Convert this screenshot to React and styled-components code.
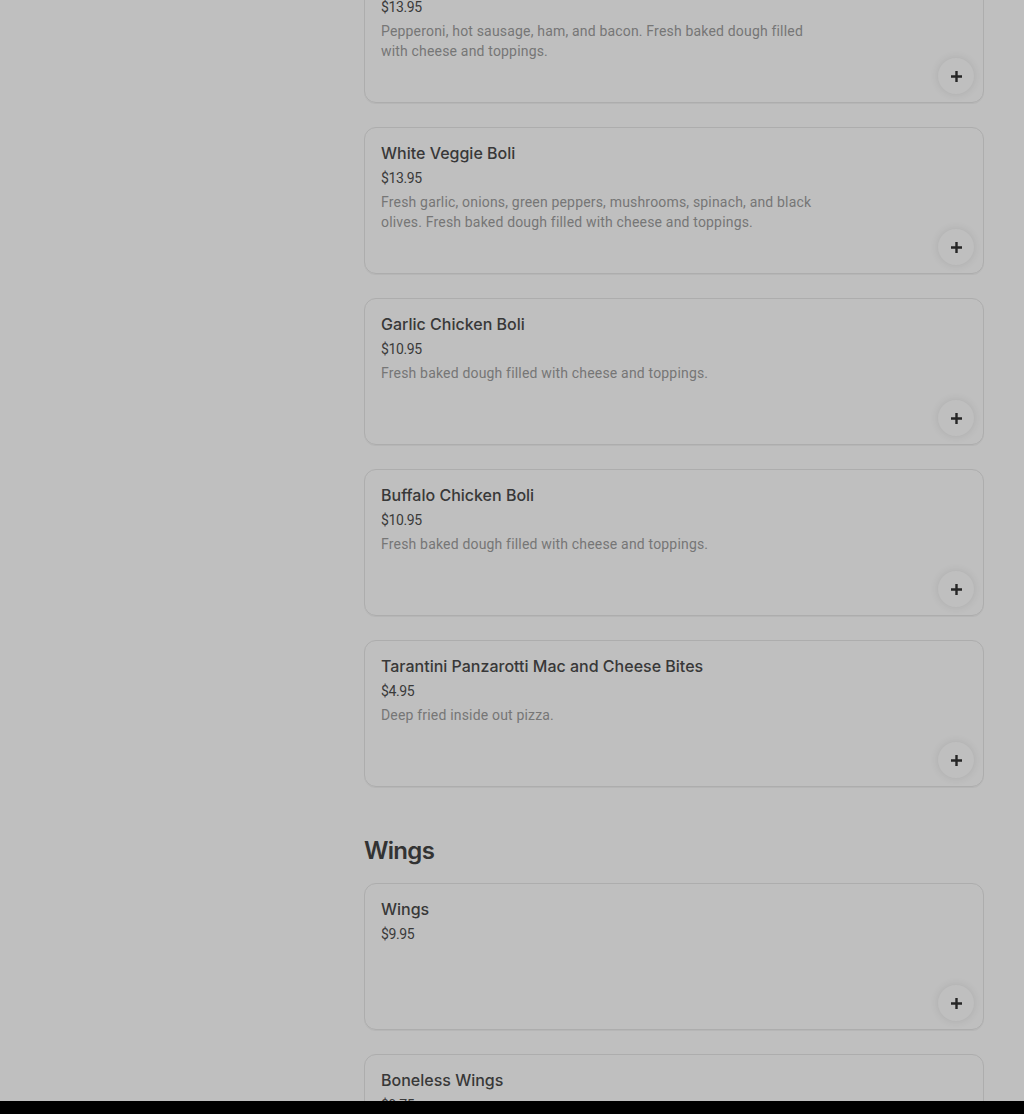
import React from "react";
import styled, { createGlobalStyle } from "styled-components";

const GlobalStyle = createGlobalStyle`
  body {
    margin: 0;
    background: #bfbfbf;
    font-family: Roboto, "Liberation Sans", sans-serif;
    color: #333;
  }
`;

const Page = styled.div`
  display: grid;
  grid-template-columns: 364px 620px;
  min-height: 100vh;
`;

const Sidebar = styled.aside``;

const Menu = styled.main`
  margin-top: -44px;
  padding-bottom: 120px;
`;

const Section = styled.section`
  & + & {
    margin-top: 48px;
  }
`;

const SectionTitle = styled.h2`
  margin: 0 0 16px;
  font-family: Inter, Roboto, sans-serif;
  font-size: 24px;
  line-height: 32px;
  font-weight: 600;
  color: #333;
  letter-spacing: -0.7px;
`;

const List = styled.div`
  display: flex;
  flex-direction: column;
  gap: 24px;
`;

const Card = styled.article`
  position: relative;
  box-sizing: border-box;
  height: 147px;
  padding: 14px 16px;
  border: 1px solid #adadad;
  border-radius: 12px;
  box-shadow: 0 1px 0 #b6b6b6;
`;

const Title = styled.h3`
  margin: 0 0 4px;
  font-family: Inter, Roboto, sans-serif;
  font-size: 16px;
  line-height: 22px;
  font-weight: 500;
  color: #383838;
`;

const Price = styled.div`
  margin-bottom: 4px;
  font-size: 14px;
  line-height: 20px;
  color: #3a3a3a;
  letter-spacing: -0.4px;
`;

const Desc = styled.p`
  margin: 0;
  max-width: 445px;
  font-size: 14px;
  line-height: 20px;
  color: #767676;
  letter-spacing: 0.18px;
`;

const AddButton = styled.button`
  position: absolute;
  right: 9px;
  bottom: 8px;
  width: 36px;
  height: 36px;
  padding: 0;
  border: none;
  border-radius: 50%;
  background: #bfbfbf;
  box-shadow: 0 0 8px rgba(0, 0, 0, 0.1);
  display: flex;
  align-items: center;
  justify-content: center;
  cursor: pointer;
`;

const BottomBar = styled.div`
  position: fixed;
  left: 0;
  right: 0;
  bottom: 0;
  height: 13px;
  background: #000;
`;

const PlusIcon = () => (
  <svg width="13" height="13" viewBox="0 0 13 13">
    <path d="M6.5 1v11M1 6.5h11" stroke="#262626" strokeWidth="2.4" />
  </svg>
);

const boliDesc = "Fresh baked dough filled with cheese and toppings.";

const sections = [
  {
    title: null,
    items: [
      {
        name: "Meat Lovers Boli",
        price: "$13.95",
        desc: "Pepperoni, hot sausage, ham, and bacon. " + boliDesc,
      },
      {
        name: "White Veggie Boli",
        price: "$13.95",
        desc:
          "Fresh garlic, onions, green peppers, mushrooms, spinach, and black olives. " +
          boliDesc,
      },
      { name: "Garlic Chicken Boli", price: "$10.95", desc: boliDesc },
      { name: "Buffalo Chicken Boli", price: "$10.95", desc: boliDesc },
      {
        name: "Tarantini Panzarotti Mac and Cheese Bites",
        price: "$4.95",
        desc: "Deep fried inside out pizza.",
      },
    ],
  },
  {
    title: "Wings",
    items: [
      { name: "Wings", price: "$9.95" },
      { name: "Boneless Wings", price: "$9.75" },
    ],
  },
];

export default function App() {
  return (
    <>
      <GlobalStyle />
      <Page>
        <Sidebar />
        <Menu>
          {sections.map((s, i) => (
            <Section key={i}>
              {s.title && <SectionTitle>{s.title}</SectionTitle>}
              <List>
                {s.items.map((item) => (
                  <Card key={item.name}>
                    <Title>{item.name}</Title>
                    <Price>{item.price}</Price>
                    {item.desc && <Desc>{item.desc}</Desc>}
                    <AddButton aria-label="Add">
                      <PlusIcon />
                    </AddButton>
                  </Card>
                ))}
              </List>
            </Section>
          ))}
        </Menu>
      </Page>
      <BottomBar />
    </>
  );
}
